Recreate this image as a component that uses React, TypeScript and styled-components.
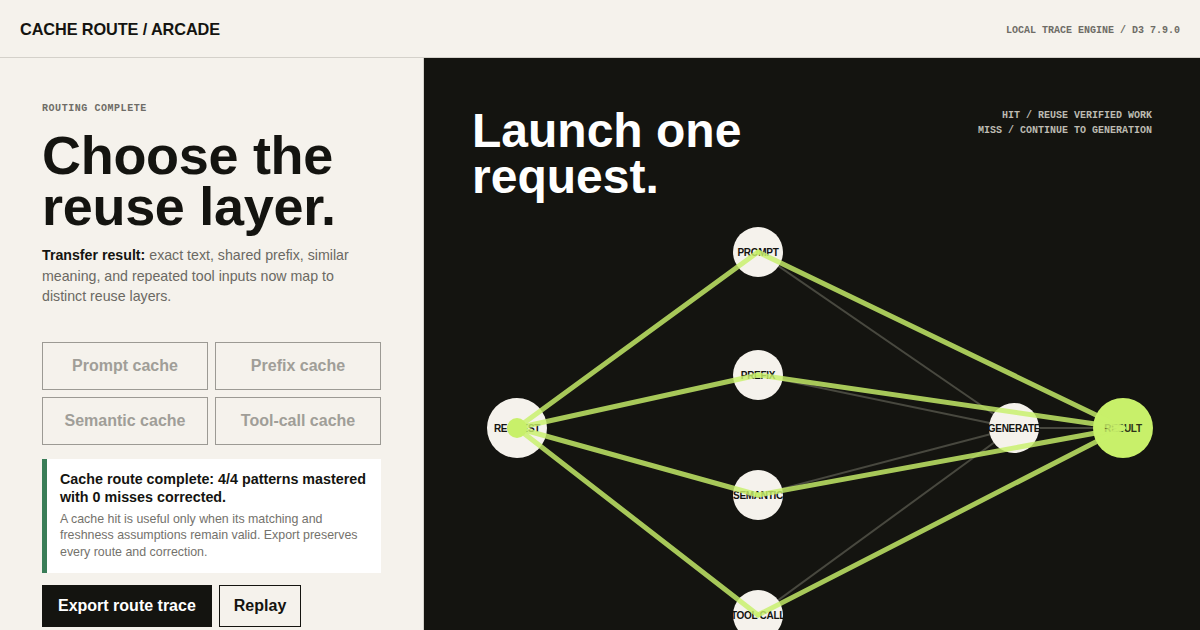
import React from 'react';
import styled, {createGlobalStyle} from 'styled-components';

const Global = createGlobalStyle`
  html, body { margin: 0; padding: 0; }
  body {
    background: #f5f2ec;
    font-family: 'Liberation Sans', Arial, sans-serif;
    color: #141410;
  }
  * { box-sizing: border-box; }
`;

const Page = styled.div`
  width: 1200px;
  height: 630px;
  display: flex;
  flex-direction: column;
  overflow: hidden;
`;

const Header = styled.header`
  height: 58px;
  flex-shrink: 0;
  display: flex;
  align-items: center;
  justify-content: space-between;
  padding: 1px 20px 0;
  border-bottom: 1px solid #d4d1ca;
`;

const Brand = styled.h1`
  margin: 0;
  font-size: 16.3px;
  font-weight: 700;
  letter-spacing: -0.1px;
`;

const Mono = styled.span<{$light?: boolean}>`
  font-family: 'Liberation Mono', 'Courier New', monospace;
  font-size: 10px;
  font-weight: 700;
  line-height: 15px;
  color: ${(p) => (p.$light ? '#bdbbb2' : '#6e6c66')};
  text-transform: uppercase;
`;

const HeaderMeta = styled(Mono)`
  margin-top: 3px;
`;

const Body = styled.div`
  flex: 1;
  display: flex;
  min-height: 0;
`;

const Side = styled.section`
  width: 424px;
  flex-shrink: 0;
  border-right: 1px solid #d4d1ca;
  padding: 43px 42px 0 42px;
  display: flex;
  flex-direction: column;
`;

const Eyebrow = styled(Mono)`
  letter-spacing: 0.55px;
`;

const Headline = styled.h2`
  margin: 14px 0 0;
  font-size: 54px;
  line-height: 51px;
  font-weight: 700;
  letter-spacing: -0.3px;
`;

const Lead = styled.p`
  margin: 13px 0 0;
  font-size: 14.2px;
  line-height: 20.5px;
  color: #6b6963;
  b { color: #141410; }
`;

const ChoiceGrid = styled.div`
  margin-top: 35px;
  display: grid;
  grid-template-columns: 166px 166px;
  grid-auto-rows: 48px;
  gap: 7px 7px;
`;

const Choice = styled.button`
  border: 1px solid #9c9a94;
  background: transparent;
  font-family: inherit;
  font-size: 16px;
  font-weight: 700;
  color: #a09e98;
  padding: 0;
`;

const Callout = styled.div`
  margin-top: 14px;
  width: 339px;
  background: #fff;
  border-left: 5px solid #3a7d57;
  padding: 11px 14px 12px 13px;
`;

const CalloutTitle = styled.p`
  margin: 0;
  font-size: 14.3px;
  line-height: 18px;
  font-weight: 700;
`;

const CalloutText = styled.p`
  margin: 5px 0 0;
  font-size: 12.4px;
  line-height: 16.8px;
  color: #74726c;
`;

const Actions = styled.div`
  margin-top: 12px;
  display: flex;
  gap: 7px;
`;

const ActionButton = styled.button<{$primary?: boolean}>`
  height: 42px;
  padding: 0 ${(p) => (p.$primary ? 15 : 14)}px;
  font-family: inherit;
  font-size: 16px;
  font-weight: 700;
  border: 1.5px solid #141410;
  background: ${(p) => (p.$primary ? '#141410' : 'transparent')};
  color: ${(p) => (p.$primary ? '#fff' : '#141410')};
`;

const Stage = styled.section`
  position: relative;
  flex: 1;
  background: #141410;
  padding: 50px 48px 0 48px;
  display: flex;
  justify-content: space-between;
  align-items: flex-start;
`;

const StageTitle = styled.h2`
  position: relative;
  z-index: 1;
  margin: 0;
  font-size: 48px;
  line-height: 46px;
  font-weight: 700;
  color: #fff;
`;

const Legend = styled.div`
  position: relative;
  z-index: 1;
  display: flex;
  flex-direction: column;
  align-items: flex-end;
`;

const Graph = styled.svg`
  position: absolute;
  inset: 0;
  width: 100%;
  height: 100%;
`;

type Node = {id: string; label: string; x: number; y: number; r: number; fill?: string};

const nodes: Node[] = [
  {id: 'req', label: 'REQUEST', x: 93, y: 370, r: 30},
  {id: 'prompt', label: 'PROMPT', x: 334, y: 194, r: 25},
  {id: 'prefix', label: 'PREFIX', x: 334, y: 317, r: 25},
  {id: 'sem', label: 'SEMANTIC', x: 334, y: 437, r: 25},
  {id: 'tool', label: 'TOOL CALL', x: 334, y: 557, r: 25},
  {id: 'gen', label: 'GENERATE', x: 590, y: 370, r: 25},
  {id: 'res', label: 'RESULT', x: 699, y: 370, r: 30, fill: '#c8f06a'},
];

const byId = (id: string) => nodes.find((n) => n.id === id)!;

const misses: [string, string][] = [
  ['prompt', 'gen'],
  ['prefix', 'gen'],
  ['sem', 'gen'],
  ['tool', 'gen'],
  ['gen', 'res'],
];

const hits: [string, string][] = [
  ['req', 'prompt'],
  ['req', 'prefix'],
  ['req', 'sem'],
  ['req', 'tool'],
  ['prompt', 'res'],
  ['prefix', 'res'],
  ['sem', 'res'],
  ['tool', 'res'],
];

function TraceGraph() {
  const req = byId('req');
  return (
    <Graph viewBox='0 0 776 572' preserveAspectRatio='xMinYMin meet'>
      {misses.map(([a, b]) => (
        <line
          key={a + b}
          x1={byId(a).x}
          y1={byId(a).y}
          x2={byId(b).x}
          y2={byId(b).y}
          stroke='#48483f'
          strokeWidth={2}
        />
      ))}
      {nodes.map((n) => (
        <g key={n.id}>
          <circle cx={n.x} cy={n.y} r={n.r} fill={n.fill || '#f5f2ec'} />
          <text
            x={n.x}
            y={n.y + 3.6}
            textAnchor='middle'
            fontFamily="'Liberation Sans', Arial, sans-serif"
            fontWeight={700}
            fontSize={10}
            letterSpacing={-0.3}
            fill={n.id === 'res' ? '#2c3218' : '#141410'}>
            {n.label}
          </text>
        </g>
      ))}
      {hits.map(([a, b]) => (
        <line
          key={a + b}
          x1={byId(a).x}
          y1={byId(a).y}
          x2={byId(b).x}
          y2={byId(b).y}
          stroke='#c8f06a'
          strokeOpacity={0.82}
          strokeWidth={5}
          strokeLinecap='round'
        />
      ))}
      <circle cx={req.x} cy={req.y} r={10} fill='#c8f06a' />
    </Graph>
  );
}

export default function App() {
  return (
    <>
      <Global />
      <Page>
        <Header>
          <Brand>CACHE ROUTE / ARCADE</Brand>
          <HeaderMeta>Local trace engine / D3 7.9.0</HeaderMeta>
        </Header>
        <Body>
          <Side>
            <Eyebrow>Routing complete</Eyebrow>
            <Headline>
              Choose the
              <br />
              reuse layer.
            </Headline>
            <Lead>
              <b>Transfer result:</b> exact text, shared prefix, similar meaning, and repeated
              tool inputs now map to distinct reuse layers.
            </Lead>
            <ChoiceGrid>
              {['Prompt cache', 'Prefix cache', 'Semantic cache', 'Tool-call cache'].map((c) => (
                <Choice key={c}>{c}</Choice>
              ))}
            </ChoiceGrid>
            <Callout>
              <CalloutTitle>
                Cache route complete: 4/4 patterns mastered with 0 misses corrected.
              </CalloutTitle>
              <CalloutText>
                A cache hit is useful only when its matching and freshness assumptions remain
                valid. Export preserves every route and correction.
              </CalloutText>
            </Callout>
            <Actions>
              <ActionButton $primary>Export route trace</ActionButton>
              <ActionButton>Replay</ActionButton>
            </Actions>
          </Side>
          <Stage>
            <TraceGraph />
            <StageTitle>
              Launch one
              <br />
              request.
            </StageTitle>
            <Legend>
              <Mono $light>Hit / reuse verified work</Mono>
              <Mono $light>Miss / continue to generation</Mono>
            </Legend>
          </Stage>
        </Body>
      </Page>
    </>
  );
}
